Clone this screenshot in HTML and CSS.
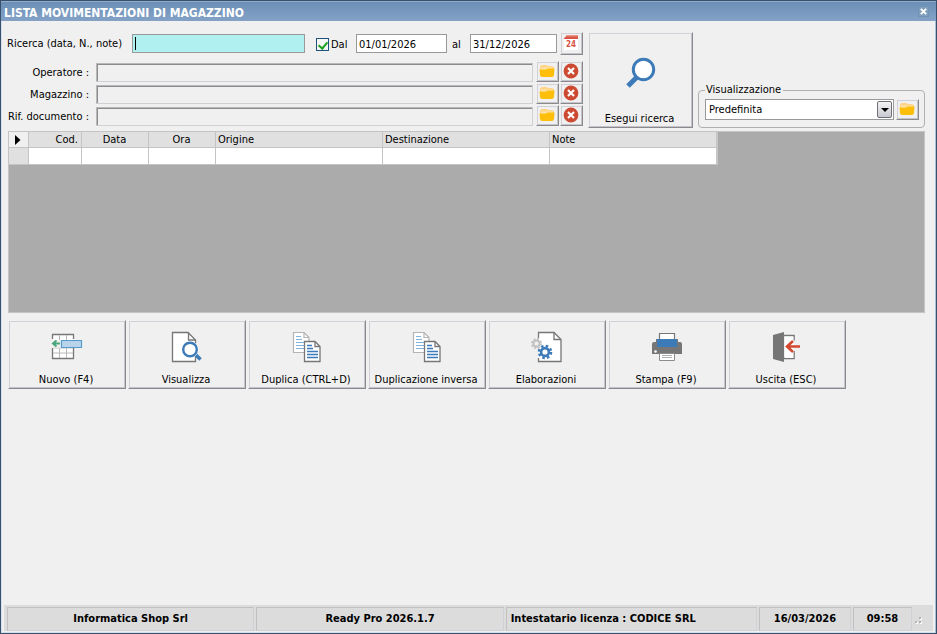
FILE: index.html
```html
<!DOCTYPE html>
<html lang="it">
<head>
<meta charset="utf-8">
<title>Lista movimentazioni di magazzino</title>
<link rel="stylesheet" href="styles.css">
</head>
<body>
<svg class="defs" aria-hidden="true">
  <defs>
    <linearGradient id="flap" x1="0" y1="0" x2="0" y2="1">
      <stop offset="0" stop-color="#ffcf70"/>
      <stop offset="1" stop-color="#fff3dc"/>
    </linearGradient>
    <symbol id="folder" viewBox="0 0 16 16">
      <path d="M1.500 8V4Q1.500 2.500 3 2.500H8L9 3.500H13Q14.500 3.500 14.500 5V8Z" fill="url(#flap)" stroke="#ffd486" stroke-width="1"/>
      <path d="M0.500 6.500H7L8.500 5.500H15.500L15 12Q14.700 14 13 14H3Q1.300 14 1 12Z" fill="#ffbe0a"/>
    </symbol>
    <symbol id="cancel" viewBox="0 0 16 16">
      <circle cx="8" cy="8" r="7.400" fill="#cd4a32"/>
      <path d="M5 5l6 6M11 5l-6 6" stroke="#fff" stroke-width="2.200"/>
    </symbol>
    <symbol id="copy" viewBox="0 0 32 32">
      <path d="M2.500 1.500H13l5 5v15H2.500Z" fill="#fff" stroke="#b4b4b4" stroke-width="1.200"/>
      <path d="M13 1.500v5h5" fill="none" stroke="#b4b4b4" stroke-width="1.200"/>
      <path d="M5 5.500h5M5 8.500h6M5 11.500h8M5 14.500h8M5 17.500h8" stroke="#80b4e0" stroke-width="1.200"/>
      <path d="M13.500 10.500H24l5 5v15H13.500Z" fill="#fff" stroke="#767676" stroke-width="1.300"/>
      <path d="M24 10.500v5h5" fill="none" stroke="#767676" stroke-width="1.300"/>
      <path d="M16 14.500h5M16 17.500h6M16 20.500h11M16 23.500h11M16 26.500h11" stroke="#3c7ab8" stroke-width="1.300"/>
    </symbol>
  </defs>
</svg>
<div class="window">
  <header class="titlebar">
    <h1>LISTA MOVIMENTAZIONI DI MAGAZZINO</h1>
    <button class="close" type="button" aria-label="Chiudi"><svg viewBox="0 0 8 8"><path d="M1 1l6 6M7 1l-6 6" stroke="#fff" stroke-width="2.200"/></svg></button>
  </header>
  <main>
    <form class="filters">
      <div class="criteria">
        <div class="search-row">
          <label class="search-label" for="q">Ricerca (data, N., note)</label>
          <input class="search" id="q" type="text">
          <input class="check" id="dal" type="checkbox" checked>
          <label class="from-label" for="dal">Dal</label>
          <input class="date" id="from" type="text" value="01/01/2026" aria-label="Data iniziale">
          <label class="to-label" for="to">al</label>
          <input class="date date-to" id="to" type="text" value="31/12/2026">
          <button class="btn mini calendar" type="button" aria-label="Calendario">
            <svg viewBox="0 0 16 16"><path d="M1 4h14v11H1Z" fill="#fff"/><path d="M4 0h11v4H0.500Z" fill="#d95344"/><path d="M4 0h11v1.500H2.500Z" fill="#eb9187"/><text x="8" y="12" text-anchor="middle">24</text></svg>
          </button>
        </div>
        <div class="lookup-row">
          <label for="op">Operatore :</label>
          <input class="lookup" id="op" type="text" readonly>
          <button class="btn mini" type="button" aria-label="Scegli operatore"><svg><use href="#folder"/></svg></button>
          <button class="btn mini" type="button" aria-label="Annulla operatore"><svg><use href="#cancel"/></svg></button>
        </div>
        <div class="lookup-row">
          <label for="mag">Magazzino :</label>
          <input class="lookup" id="mag" type="text" readonly>
          <button class="btn mini" type="button" aria-label="Scegli magazzino"><svg><use href="#folder"/></svg></button>
          <button class="btn mini" type="button" aria-label="Annulla magazzino"><svg><use href="#cancel"/></svg></button>
        </div>
        <div class="lookup-row">
          <label for="rif">Rif. documento :</label>
          <input class="lookup" id="rif" type="text" readonly>
          <button class="btn mini" type="button" aria-label="Scegli documento"><svg><use href="#folder"/></svg></button>
          <button class="btn mini" type="button" aria-label="Annulla documento"><svg><use href="#cancel"/></svg></button>
        </div>
      </div>
      <button class="btn run" type="button">
        <svg viewBox="0 0 32 32"><path d="M11.500 20.500L3 29" stroke="#3c7ab8" stroke-width="5"/><circle cx="18.500" cy="12.500" r="10.200" fill="#fff" stroke="#3c7ab8" stroke-width="3"/></svg>
        <span>Esegui ricerca</span>
      </button>
      <fieldset class="view">
        <legend>Visualizzazione</legend>
        <div class="view-row">
          <div class="combo">
            <select aria-label="Visualizzazione"><option>Predefinita</option></select>
            <span class="drop"></span>
          </div>
          <button class="btn mini" type="button" aria-label="Gestisci visualizzazioni"><svg><use href="#folder"/></svg></button>
        </div>
      </fieldset>
    </form>
    <section class="grid">
      <table>
        <colgroup><col class="c-mark"><col class="c-cod"><col class="c-short"><col class="c-short"><col class="c-long"><col class="c-long"><col class="c-long"></colgroup>
        <thead><tr><th class="marker"><svg viewBox="0 0 6 10"><path d="M0 0l5.500 5L0 10Z"/></svg></th><th class="right">Cod.</th><th class="center">Data</th><th class="center">Ora</th><th>Origine</th><th>Destinazione</th><th>Note</th></tr></thead>
        <tbody><tr><td class="selector"></td><td></td><td></td><td></td><td></td><td></td><td></td></tr></tbody>
      </table>
    </section>
    <nav class="toolbar">
      <button class="btn tool" type="button">
        <svg viewBox="0 0 32 32"><path d="M1.500 3.500h21v24h-21Z" fill="#fff"/><path d="M1 3.500h22M1 27.500h22" stroke="#767676" stroke-width="1.400"/><path d="M1.500 3v5M1.500 17v11M22.500 3v5M22.500 17v11" stroke="#767676" stroke-width="1.300"/><path d="M8.500 4v5M15.500 4v5M8.500 17v10M15.500 17v10M2 22h20" stroke="#b8b8b8"/><path d="M2 17h20" stroke="#c8c8c8"/><path d="M0 9h10v7H0Z" fill="#f0f0f0"/><path d="M10.500 9.500h20v7h-20Z" fill="#b9d3ea" stroke="#559bcb" stroke-width="1.200"/><path d="M9 12.500H2M5.500 9.500L2 12.500l3.500 3" fill="none" stroke="#4ca77c" stroke-width="2"/></svg>
        <span>Nuovo (F4)</span>
      </button>
      <button class="btn tool" type="button">
        <svg viewBox="0 0 32 32"><path d="M1.500 1.500H17l7.500 7.500v21.500H1.500Z" fill="#fff" stroke="#767676" stroke-width="1.300"/><path d="M17.500 1.500v7.500h7" fill="none" stroke="#767676" stroke-width="1.300"/><path d="M24 23l5.500 5.500" stroke="#3c7ab8" stroke-width="3.600"/><circle cx="19" cy="18.500" r="8.500" fill="#fff"/><circle cx="19" cy="18.500" r="6.800" fill="#fff" stroke="#3c7ab8" stroke-width="2.400"/></svg>
        <span>Visualizza</span>
      </button>
      <button class="btn tool" type="button"><svg><use href="#copy"/></svg><span>Duplica (CTRL+D)</span></button>
      <button class="btn tool" type="button"><svg><use href="#copy"/></svg><span>Duplicazione inversa</span></button>
      <button class="btn tool" type="button">
        <svg viewBox="-3 0 32 32"><path d="M4.500 1.500H20l7 7v22H4.500Z" fill="#fff"/><path d="M4.500 7V1.500H20l7 7v22H4.500V27" fill="none" stroke="#767676" stroke-width="1.300"/><path d="M20 1.500v7h7" fill="none" stroke="#767676" stroke-width="1.300"/><circle cx="2.500" cy="12.500" r="4.500" fill="none" stroke="#c0c0c0" stroke-width="2" stroke-dasharray="2 1.530"/><circle cx="2.500" cy="12.500" r="3" fill="#f0f0f0" stroke="#c0c0c0" stroke-width="1.800"/><circle cx="11" cy="21" r="6" fill="none" stroke="#3c7ab8" stroke-width="2.600" stroke-dasharray="2.500 2.210"/><circle cx="11" cy="21" r="3.900" fill="#fff" stroke="#3c7ab8" stroke-width="2.600"/></svg>
        <span>Elaborazioni</span>
      </button>
      <button class="btn tool" type="button">
        <svg viewBox="0 0 32 32"><path d="M8.500 2.500h15v8h-15Z" fill="#fff" stroke="#767676" stroke-width="1.200"/><path d="M1 13q0-2 2-2h2V8h2v7h18V8h2v3h2q2 0 2 2v10H1Z" fill="#767676"/><path d="M6 8h20v8H6Z" fill="#3c7ab8"/><circle cx="4.500" cy="20.500" r="1.300" fill="#fff"/><path d="M8.500 22.500h15v7H8.500Z" fill="#fff" stroke="#8c8c8c"/><path d="M11 24.500h10M11 26.500h10" stroke="#b0b0b0"/></svg>
        <span>Stampa (F9)</span>
      </button>
      <button class="btn tool" type="button">
        <svg viewBox="0 0 32 32"><path d="M13 4.500h10v5M23 20v7.500H13" fill="none" stroke="#767676" stroke-width="1.600"/><path d="M14 5.500h8.500v21.500H14Z" fill="#fff"/><path d="M2 4l11-3v30L2 28Z" fill="#767676"/><path d="M29 15.500H17M22 10l-6 5.500 6 5.500" fill="none" stroke="#d2492f" stroke-width="2.600"/></svg>
        <span>Uscita (ESC)</span>
      </button>
    </nav>
  </main>
  <footer class="status">
    <div class="panel">Informatica Shop Srl</div>
    <div class="panel">Ready Pro 2026.1.7</div>
    <div class="panel start">Intestatario licenza : CODICE SRL</div>
    <div class="panel day">16/03/2026</div>
    <div class="panel hour">09:58</div>
    <svg class="grip" viewBox="0 0 10 10"><path d="M2 7h2v2H2ZM6 7h2v2H6ZM6 3h2v2H6Z" fill="#fff"/><path d="M1 6h2v2H1ZM5 6h2v2H5ZM5 2h2v2H5Z" fill="#b4b4b4"/></svg>
  </footer>
</div>
</body>
</html>
```

FILE: styles.css
```css
* { box-sizing: border-box; }

body {
  margin: 0;
  background: #f0f0f0;
  color: #000;
}

body, button, input, select {
  font-family: "DejaVu Sans Condensed", "Noto Sans", sans-serif;
  font-size: 11px;
  line-height: 14px;
}

.defs { position: absolute; width: 0; height: 0; }

.window {
  display: flex;
  flex-direction: column;
  min-height: 100vh;
  border: 1px solid #38506c;
  box-shadow: inset 1px 0 #d5dfec, inset -1px 0 #a9bfd9, inset 0 -1px #d5dfec;
}

.titlebar {
  display: flex;
  align-items: center;
  justify-content: space-between;
  height: 20px;
  padding: 0 7px 0 3px;
  border-top: 1px solid #93aecb;
  background: linear-gradient(#6b8fb7, #84a2c6);
}

h1 {
  margin: 0;
  padding-top: 3px;
  color: #fff;
  font-size: 12px;
  line-height: 14px;
}

.close {
  display: flex;
  width: 11px;
  height: 11px;
  padding: 1px;
  border: 1px solid #6f94b4;
  background: #7f9fbd;
}

.close svg { width: 100%; height: 100%; }

main { flex: 1; padding: 11px 11px 0 7px; }

.filters { display: flex; }

.criteria { flex: 1; min-width: 0; margin-left: -1px; padding-bottom: 2px; }

.search-row, .lookup-row { display: flex; align-items: center; }

.search-row { height: 23px; margin-bottom: 5px; }

.lookup-row { height: 22px; }

.search-label { width: 125px; white-space: nowrap; }

.search {
  flex: 1;
  min-width: 0;
  height: 19px;
  border: 1px solid #999;
  background: linear-gradient(#000, #000) 2px 2px / 1px 13px no-repeat #b0f0f0;
}

.check {
  appearance: none;
  width: 13px;
  height: 13px;
  margin: 1px 2px 0 11px;
  border: 1px solid #1c5180;
  background: #f6f6f4;
}

.check:checked::before {
  content: "";
  display: block;
  width: 4px;
  height: 7px;
  margin: 1px auto 0;
  border: solid #21a121;
  border-width: 0 2px 2px 0;
  transform: rotate(40deg);
}

.from-label { width: 25px; padding-top: 3px; }

.date {
  width: 91px;
  height: 19px;
  padding: 1px 2px 0;
  border: 1px solid #999;
  background: #fff;
}

.to-label { width: 23px; padding: 3px 0 0 5px; }

.date-to { width: 87px; }

.lookup-row label { width: 82px; padding-top: 3px; text-align: right; white-space: nowrap; }

.lookup {
  flex: 1;
  min-width: 0;
  height: 19px;
  margin: 2px 3px 0 7px;
  border: 1px solid #d0d0d4;
  border-top-color: #b8b8bc;
  border-left-color: #b8b8bc;
  background: #f0f0f0;
  box-shadow: inset 1px 1px #8c8c8c;
}

.btn {
  border: 1px solid;
  border-color: #f0f0f0 #8a8a8e #8a8a8e #f0f0f0;
  background: #f0f0f0;
  box-shadow: inset 1px 1px #d0d0d6, inset -1px -1px #c4c4ca;
  white-space: nowrap;
}

.mini {
  display: flex;
  flex: none;
  align-items: center;
  justify-content: center;
  width: 23px;
  height: 21px;
  margin-right: 1px;
  padding: 0 1px 1px 0;
}

.mini svg { width: 16px; height: 16px; }

.calendar { height: 23px; margin: 0 1px 0 3px; padding-bottom: 2px; }

.calendar text { fill: #d95344; font-size: 8px; font-weight: bold; }

.run, .tool {
  display: flex;
  flex-direction: column;
  align-items: center;
  justify-content: flex-end;
  padding: 0 0 1px;
}

.run span, .tool span { padding-right: 2px; }

.run { width: 105px; margin: 0 5px 0 4px; }

.run svg { width: 32px; height: 32px; margin-bottom: 23px; }

.view {
  align-self: flex-end;
  width: 227px;
  min-width: 0;
  margin: 0;
  padding: 3px 5px 7px 6px;
  border: 1px solid #b0b0b0;
  border-radius: 4px;
}

legend { padding: 0 2px 0 1px; line-height: 12px; }

.view-row { display: flex; gap: 2px; }

.view-row .mini { margin: 0; }

.combo { position: relative; flex: 1; }

select {
  appearance: none;
  width: 100%;
  height: 21px;
  padding: 1px 3px 0;
  border: 1px solid #999;
  border-radius: 0;
  background: #fff;
  color: #000;
}

.drop {
  position: absolute;
  top: 2px;
  right: 2px;
  display: grid;
  place-items: center;
  width: 15px;
  height: 17px;
  border: 1px solid #707078;
  border-radius: 2px;
  background: linear-gradient(#f4f4f4, #c8c8d0);
  pointer-events: none;
}

.drop::before {
  content: "";
  border: 4px solid transparent;
  border-top-color: #000;
  border-bottom: 0;
}

.grid {
  height: 182px;
  margin-top: 3px;
  border: 1px solid #c4c4c4;
  background: #ababab;
}

table {
  width: 709px;
  table-layout: fixed;
  border-collapse: separate;
  border-spacing: 0;
  border-right: 1px solid #c8c8c8;
}

.c-mark { width: 20px; }
.c-cod { width: 53px; }
.c-short { width: 67px; }
.c-long { width: 167px; }

th, td {
  height: 16px;
  padding: 0 3px 0 2px;
  border: solid #c4c4c4;
  border-width: 0 1px 1px 0;
  background: #e0e0e0;
  font-weight: normal;
  line-height: 15px;
  text-align: left;
}

td { height: 17px; background: #fff; }

.right { text-align: right; }
.center { text-align: center; }

th.marker { background: #f0f0f0; text-align: center; }

.marker svg { display: block; width: 6px; height: 10px; margin: auto; }

.selector { background: #e0e0e0; }

.toolbar {
  display: flex;
  flex-wrap: wrap;
  gap: 2px;
  margin-top: 7px;
}

.tool { width: 118px; height: 69px; }

.tool svg { width: 32px; height: 32px; margin-bottom: 10px; }

.status {
  display: flex;
  gap: 2px;
  height: 26px;
  margin: 0 3px 2px;
  padding: 2px 9px 0 3px;
  background: #dcdcdc;
}

.panel {
  flex: 1 1 0;
  min-width: 0;
  border: 1px solid #d0d0d6;
  border-top-color: #c0c0c0;
  border-left-color: #c0c0c0;
  font-weight: bold;
  line-height: 22px;
  text-align: center;
  white-space: nowrap;
}

.start { padding-left: 4px; text-align: left; }

.day { flex: 0 0 92px; }

.hour { flex: 0 0 59px; }

.grip { width: 10px; height: 10px; margin-top: 8px; }
```
